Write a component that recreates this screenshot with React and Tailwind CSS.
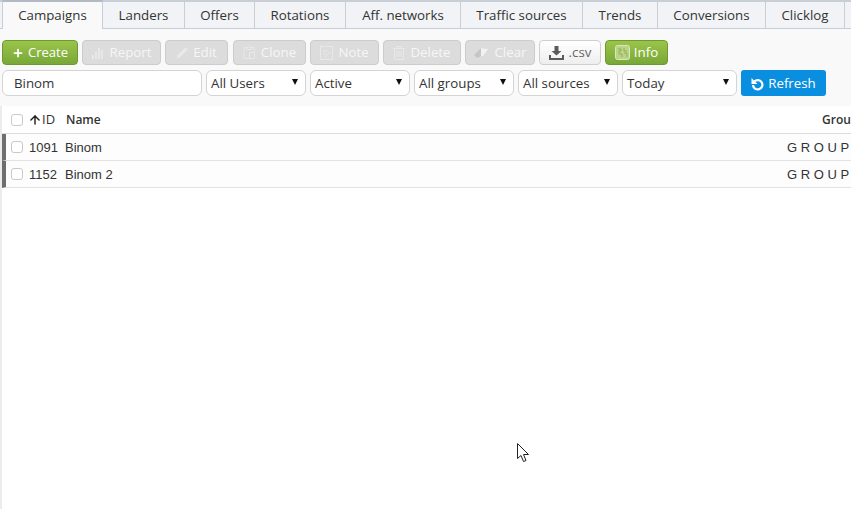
import { ArrowUp, Plus, Pencil } from 'lucide-react'

const tabs = [
  ['Campaigns', 'w-[101px]'],
  ['Landers', 'w-[82px]'],
  ['Offers', 'w-[70px]'],
  ['Rotations', 'w-[91px]'],
  ['Aff. networks', 'w-[115px]'],
  ['Traffic sources', 'w-[122px]'],
  ['Trends', 'w-[75px]'],
  ['Conversions', 'w-[108px]'],
  ['Clicklog', 'w-[79px]'],
]

const disabledBtn = 'h-[25px] flex items-center justify-center gap-[5px] rounded-[4px] border border-[#cccccc] bg-[#dcdcdc] text-[13.3px] text-[#f6f6f6]'
const selectBox = 'h-[26px] flex items-center justify-between rounded-[6px] border border-[#d4d4d4] bg-white pl-[4px] pr-[7px] text-[13.3px] text-[#333]'

function BarsIcon() {
  return (
    <svg width="13" height="12" viewBox="0 0 13 12" fill="#e8e8e8">
      <rect x="0" y="8" width="2" height="4" />
      <rect x="3" y="5" width="2" height="7" />
      <rect x="6" y="1" width="2" height="11" />
      <rect x="9" y="3" width="2" height="9" />
    </svg>
  )
}

function CloneIcon() {
  return (
    <svg width="13" height="15" viewBox="0 0 13 15" fill="none" stroke="#e8e8e8" strokeWidth="1">
      <path d="M3 2.500H1v11h6M9 2.500h2v4" />
      <path d="M3.500 4.500v-2h1.500a1 1 0 0 1 2 0h1.500v2z" />
      <path d="M6.500 7.500h5v6h-5z" />
    </svg>
  )
}

function NoteIcon() {
  return (
    <svg width="13" height="14" viewBox="0 0 13 14" fill="none" stroke="#e8e8e8" strokeWidth="1">
      <rect x="0.500" y="0.500" width="12" height="13" />
      <path d="M3 5h5M3 8h3M5 11l5-5" />
    </svg>
  )
}

function TrashIcon() {
  return (
    <svg width="12" height="14" viewBox="0 0 12 14" fill="none" stroke="#e8e8e8" strokeWidth="1">
      <path d="M0 2.500h12M4 2.500v-2h4v2" />
      <path d="M1.500 2.500v11h9v-11M4 5v6M6 5v6M8 5v6" />
    </svg>
  )
}

function EraserIcon() {
  return (
    <svg width="16" height="12" viewBox="0 0 16 12">
      <path d="M1 8 L8 1 L12 1 L8 9 L4 11 Z" fill="#c6c6c6" />
      <path d="M8 1 L15 2 L10 9 L8 9 Z" fill="#f2f2f2" />
    </svg>
  )
}

function DownloadIcon() {
  return (
    <svg width="15" height="14" viewBox="0 0 15 14" fill="#5a5a5a">
      <path d="M5.500 0h4v5h3l-5 4.500L2.500 5h3z" />
      <path d="M0 9h2v3h11V9h2v5H0z" />
    </svg>
  )
}

function InfoIcon() {
  return (
    <svg width="15" height="15" viewBox="0 0 15 15" fill="none">
      <rect x="0.500" y="0.500" width="14" height="14" rx="2" fill="#b9d389" stroke="#d9e8bd" />
      <path d="M3 4h3v2H4v3h3v3M9 3v3h3M9 8h3v4" stroke="#8fb04f" strokeWidth="1" />
    </svg>
  )
}

function RefreshIcon() {
  return (
    <svg width="13" height="14" viewBox="0 0 13 14" fill="none">
      <path d="M3.500 4.300A4.700 4.700 0 1 1 2 8" stroke="white" strokeWidth="2.200" />
      <path d="M0.500 1v6h6z" fill="white" />
    </svg>
  )
}

function Select({ label, className }) {
  return (
    <div className={`${selectBox} ${className}`}>
      <span className="pt-px">{label}</span>
      <svg width="6" height="6" viewBox="0 0 6 6" fill="#111" className="-mt-[2px]">
        <path d="M0 0h6L3 6z" />
      </svg>
    </div>
  )
}

function Checkbox() {
  return <span className="block shrink-0 w-[12px] h-[12px] rounded-[3px] border border-[#c9c9c9] bg-white" />
}

function Row({ id, name }) {
  return (
    <div className="h-[27px] flex items-center border-b border-[#e3e3e3] bg-[#fdfdfd] border-l-[4px] border-l-[#6e6e6e] font-['Liberation_Sans',sans-serif] text-[13px] text-[#333]">
      <span className="ml-[5px]"><Checkbox /></span>
      <span className="ml-[6px] w-[36px] pt-px">{id}</span>
      <span className="flex-1 pt-px">{name}</span>
      <span className="whitespace-nowrap w-[64px] pt-px">G R O U P</span>
    </div>
  )
}

export default function App() {
  return (
    <div className="relative w-[851px] h-[509px] overflow-hidden bg-white font-['Open_Sans',sans-serif]">
      <div className="h-[106px] bg-[#f9f9f9]">
        <div className="h-[29px] pl-[2px] flex border-t-2 border-b border-[#c8ced6] bg-[#f1f3f6]">
          {tabs.map(([label, width], i) => (
            <div
              key={label}
              className={`${width} shrink-0 flex items-center justify-center pt-px border-r border-[#c8ced6] text-[13.3px] text-[#333] ${i === 0 ? 'bg-[#f9f9f9] border-t-2 border-t-[#b3bac4] -mt-[2px] h-[29px] border-l' : ''}`}
            >
              {label}
            </div>
          ))}
        </div>

        <div className="mt-[11px] pl-[2px] flex gap-[4px]">
          <div className="w-[76px] h-[25px] flex items-center justify-center gap-[4px] rounded-[4px] border border-[#6a9a30] bg-gradient-to-b from-[#9bc449] to-[#78a838] text-[13px] text-white">
            <Plus size={12} strokeWidth={3.500} />
            Create
          </div>
          <div className={`${disabledBtn} w-[79px]`}><BarsIcon />Report</div>
          <div className={`${disabledBtn} w-[63px]`}><Pencil size={12} color="#e8e8e8" fill="#e8e8e8" />Edit</div>
          <div className={`${disabledBtn} w-[73px] ml-[1px]`}><CloneIcon />Clone</div>
          <div className={`${disabledBtn} w-[69px]`}><NoteIcon />Note</div>
          <div className={`${disabledBtn} w-[78px]`}><TrashIcon />Delete</div>
          <div className={`${disabledBtn} w-[70px]`}><EraserIcon />Clear</div>
          <div className="w-[62px] h-[25px] flex items-center justify-center gap-[5px] rounded-[4px] border border-[#cfcfcf] bg-gradient-to-b from-white to-[#eeeeee] text-[13.3px] text-[#666]">
            <DownloadIcon />
            .csv
          </div>
          <div className="w-[63px] h-[25px] flex items-center justify-center gap-[4px] rounded-[4px] border border-[#6a9a30] bg-gradient-to-b from-[#9bc449] to-[#78a838] text-[13.3px] text-white">
            <InfoIcon />
            Info
          </div>
        </div>

        <div className="mt-[5px] pl-[2px] flex gap-[4px]">
          <div className="w-[200px] h-[26px] flex items-center rounded-[6px] border border-[#d4d4d4] bg-white pl-[11px] pt-px text-[13.3px] text-[#333]">Binom</div>
          <Select label="All Users" className="w-[100px]" />
          <Select label="Active" className="w-[100px]" />
          <Select label="All groups" className="w-[100px]" />
          <Select label="All sources" className="w-[100px]" />
          <Select label="Today" className="w-[115px]" />
          <div className="w-[85px] h-[26px] flex items-center justify-center gap-[4px] rounded-[3px] bg-[#0a8ee0] pt-px text-[13.3px] text-white">
            <RefreshIcon />
            Refresh
          </div>
        </div>
      </div>

      <div className="h-[403px] border-l-2 border-[#ececec]">
        <div className="h-[28px] flex items-center border-b border-[#dcdcdc] text-[12px] font-semibold text-[#333]">
          <span className="ml-[9px]"><Checkbox /></span>
          <ArrowUp size={14} strokeWidth={2.500} color="#222" className="ml-[5px]" />
          <span className="w-[24px] text-[13px] font-medium">ID</span>
          <span className="flex-1">Name</span>
          <span className="whitespace-nowrap w-[29px] overflow-hidden">Group</span>
        </div>
        <Row id="1091" name="Binom" />
        <Row id="1152" name="Binom 2" />
      </div>

      <svg className="absolute left-[517px] top-[443px]" width="13" height="20" viewBox="0 0 13 20" fill="white" stroke="#222" strokeWidth="1">
        <path d="M0.500 0.500V15.500L4 12.500L6.500 18.500L9 17.500L6.500 11.500H11.500Z" />
      </svg>
    </div>
  )
}
